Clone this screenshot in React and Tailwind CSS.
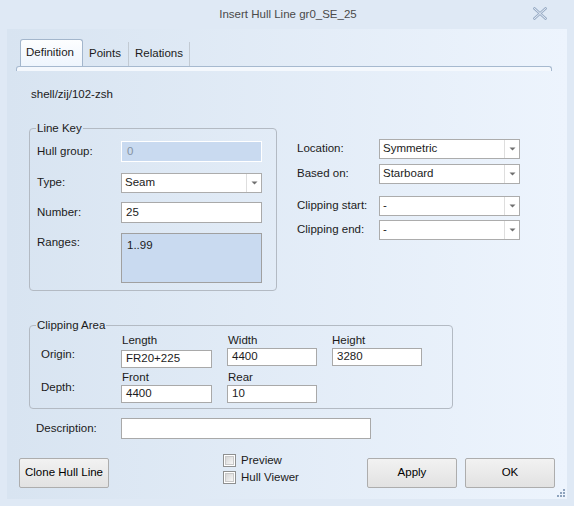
import React from "react";

function Combo({ value, w = "w-[141px]" }) {
  return (
    <div className={`${w} h-[20px] border border-[#acacac] bg-white flex items-stretch`}>
      <div className="flex-1 pl-[3px] flex items-center leading-none">{value}</div>
      <div className="w-[15px] border-l border-[#dedede] flex items-center justify-center">
        <svg width="7" height="4" viewBox="0 0 7 4">
          <path d="M0.5 0.5 L6.5 0.5 L3.5 3.5 Z" fill="#707070" />
        </svg>
      </div>
    </div>
  );
}

function Input({ value, className = "" }) {
  return (
    <div className={`border border-[#a9a9a9] bg-white pl-[4px] flex items-center leading-none ${className}`}>
      {value}
    </div>
  );
}

function Button({ children, className = "" }) {
  return (
    <div
      className={`w-[90px] h-[30px] border border-[#adadad] rounded-[2px] bg-gradient-to-b from-[#f2f2f2] to-[#e2e2e2] flex items-center justify-center text-black ${className}`}
    >
      {children}
    </div>
  );
}

function Check({ label }) {
  return (
    <div className="flex items-center h-[17px]">
      <div className="w-[13px] h-[13px] border border-[#8e8f8f] bg-white p-[1px]">
        <div className="w-full h-full bg-gradient-to-br from-[#d6d6d6] to-[#f7f7f7] border border-[#c8c8c8]" />
      </div>
      <span className="ml-[5px]">{label}</span>
    </div>
  );
}

export default function App() {
  return (
    <div className="w-[574px] h-[506px] bg-[#dfe9f5] font-['Liberation_Sans',Arial,sans-serif] text-[11.5px] text-[#1b1b1b] flex flex-col overflow-hidden">
      {/* Title bar */}
      <div className="h-[29px] relative flex items-center justify-center text-[#4a4a4a] text-[11.5px]">
        <span className="ml-[2px]">Insert Hull Line gr0_SE_25</span>
        <svg className="absolute left-[533px] top-[7px]" width="14" height="13" viewBox="0 0 14 13">
          <path d="M1.5 1.5 L12.5 11.5 M12.5 1.5 L1.5 11.5" stroke="#9aaec7" strokeWidth="2.6" strokeLinecap="square" />
          <path d="M1.5 1.5 L12.5 11.5 M12.5 1.5 L1.5 11.5" stroke="#eef3fa" strokeWidth="0.9" strokeLinecap="square" />
        </svg>
      </div>

      {/* Content panel */}
      <div className="relative mx-[7px] h-[470px] bg-gradient-to-r from-[#d8e4f1] to-[#edf4fd] flex flex-col">
        {/* Tabs */}
        <div className="ml-[13px] mt-[10px] flex items-end h-[27px]">
          <div className="w-[63px] h-[27px] border border-b-0 border-[#a3b6cc] rounded-t-[3px] bg-gradient-to-b from-[#fdfeff] to-[#eef5fd] pl-[5px] flex items-center">
            Definition
          </div>
          <div className="w-[46px] h-[24px] border-r border-[#c2cad3] pl-[6px] flex items-center">Points</div>
          <div className="w-[61px] h-[24px] border-r border-[#c2cad3] pl-[6px] flex items-center">Relations</div>
        </div>
        <div className="ml-[9px] w-[536px] h-[5px] border border-b-0 border-[#a6b9cf] rounded-t-[3px] bg-[#f4f8fd]" />

        <div className="ml-[24px] mt-[16px] leading-[14px]">shell/zij/102-zsh</div>

        {/* Upper section */}
        <div className="flex items-start mt-[20px]">
          <fieldset className="ml-[22px] w-[248px] border border-[#b3bac3] rounded-[4px] pb-[7px]">
            <legend className="ml-[6px] px-[1px] leading-[14px]">Line Key</legend>
            <div className="flex items-center mt-[6px]">
              <div className="w-[91px] pl-[7px]">Hull group:</div>
              <div className="w-[141px] h-[21px] bg-[#c9daf0] border border-white pl-[5px] flex items-center text-[#8593a3] leading-none">0</div>
            </div>
            <div className="flex items-center mt-[11px]">
              <div className="w-[91px] pl-[7px]">Type:</div>
              <Combo value="Seam" />
            </div>
            <div className="flex items-center mt-[9px]">
              <div className="w-[91px] pl-[7px]">Number:</div>
              <Input value="25" className="w-[141px] h-[21px]" />
            </div>
            <div className="flex items-start mt-[10px]">
              <div className="w-[91px] pl-[7px] mt-[1px]">Ranges:</div>
              <div className="w-[141px] h-[50px] bg-[#c9daf0] border border-[#a0a0a0] pl-[5px] pt-[3px]">1..99</div>
            </div>
          </fieldset>

          <div className="ml-[20px] mt-[18px] flex flex-col">
            <div className="flex items-center">
              <div className="w-[82px]">Location:</div>
              <Combo value="Symmetric" />
            </div>
            <div className="flex items-center mt-[5px]">
              <div className="w-[82px]">Based on:</div>
              <Combo value="Starboard" />
            </div>
            <div className="flex items-center mt-[12px]">
              <div className="w-[82px]">Clipping start:</div>
              <Combo value="-" />
            </div>
            <div className="flex items-center mt-[4px]">
              <div className="w-[82px]">Clipping end:</div>
              <Combo value="-" />
            </div>
          </div>
        </div>

        {/* Clipping Area */}
        <fieldset className="ml-[22px] mt-[27px] w-[424px] border border-[#b3bac3] rounded-[4px] pb-[5px]">
          <legend className="ml-[6px] px-[1px] leading-[14px]">Clipping Area</legend>
          <div className="flex items-start pt-[1px]">
            <div className="w-[91px] pl-[11px] mt-[14px] leading-[14px]">Origin:</div>
            <div className="flex flex-col w-[106px]">
              <div className="leading-[14px] pl-[1px]">Length</div>
              <Input value="FR20+225" className="w-[91px] h-[18px] mt-[3px]" />
            </div>
            <div className="flex flex-col w-[105px]">
              <div className="leading-[14px] pl-[1px]">Width</div>
              <Input value="4400" className="w-[90px] h-[18px] mt-[1px]" />
            </div>
            <div className="flex flex-col">
              <div className="leading-[14px]">Height</div>
              <Input value="3280" className="w-[90px] h-[18px] mt-[1px]" />
            </div>
          </div>
          <div className="flex items-start mt-[2px]">
            <div className="w-[91px] pl-[11px] mt-[10px] leading-[14px]">Depth:</div>
            <div className="flex flex-col w-[106px]">
              <div className="leading-[14px] pl-[1px]">Front</div>
              <Input value="4400" className="w-[91px] h-[18px] mt-[1px]" />
            </div>
            <div className="flex flex-col">
              <div className="leading-[14px] pl-[1px]">Rear</div>
              <Input value="10" className="w-[90px] h-[18px] mt-[1px]" />
            </div>
          </div>
        </fieldset>

        {/* Description */}
        <div className="flex items-center mt-[9px]">
          <div className="w-[114px] pl-[29px]">Description:</div>
          <Input value="" className="w-[250px] h-[21px]" />
        </div>

        {/* Bottom row */}
        <div className="flex items-start mt-[13px]">
          <Button className="ml-[12px] mt-[6px]">Clone Hull Line</Button>
          <div className="ml-[114px] flex flex-col">
            <Check label="Preview" />
            <Check label="Hull Viewer" />
          </div>
          <Button className="ml-[68px] mt-[6px]">Apply</Button>
          <Button className="ml-[8px] mt-[6px]">OK</Button>
        </div>

        {/* Resize grip */}
        <svg className="absolute right-[1px] bottom-[1px]" width="10" height="10" viewBox="0 0 10 10">
          <g fill="#8ea3bd">
            <rect x="7" y="1" width="2" height="2" />
            <rect x="4" y="4" width="2" height="2" />
            <rect x="7" y="4" width="2" height="2" />
            <rect x="1" y="7" width="2" height="2" />
            <rect x="4" y="7" width="2" height="2" />
            <rect x="7" y="7" width="2" height="2" />
          </g>
        </svg>
      </div>
    </div>
  );
}
